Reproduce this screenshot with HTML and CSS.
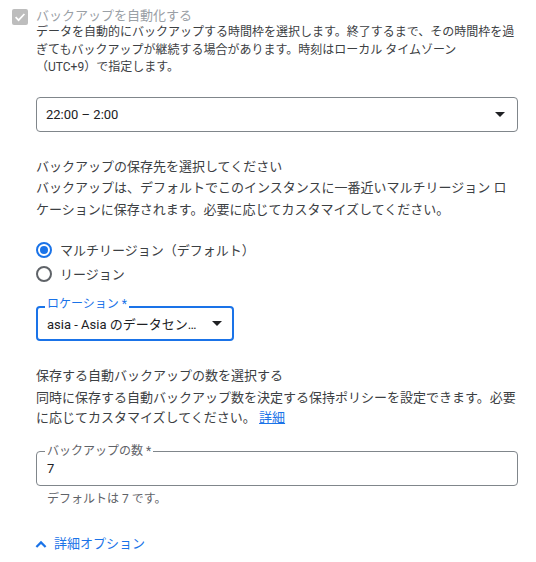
FILE: index.html
```html
<!DOCTYPE html>
<html lang="ja">
<head>
<meta charset="utf-8">
<title>バックアップ設定</title>
<link rel="stylesheet" href="styles.css">
</head>
<body>
<div class="panel">
  <div class="auto-row">
    <span class="checkbox">
      <svg width="14" height="14" viewBox="0 0 14 14"><path d="M2.6 7.2 L5.6 10.2 L11.4 4" fill="none" stroke="#fff" stroke-width="1.7"/></svg>
    </span>
    <div class="auto-text">
      <div class="auto-label">バックアップを自動化する</div>
      <p class="auto-desc">データを自動的にバックアップする時間枠を選択します。終了するまで、その時間枠を過ぎてもバックアップが継続する場合があります。時刻はローカル タイムゾーン<br>（UTC+9）で指定します。</p>
    </div>
  </div>

  <div class="select select-time">
    <span class="select-value">22:00 – 2:00</span>
    <svg class="arrow" width="10" height="5" viewBox="0 0 10 5"><polygon points="0,0 10,0 5,5" fill="#202124"/></svg>
  </div>

  <section class="section">
    <h3 class="section-title">バックアップの保存先を選択してください</h3>
    <p class="section-desc desc-wide">バックアップは、デフォルトでこのインスタンスに一番近いマルチリージョン ロ<br>ケーションに保存されます。必要に応じてカスタマイズしてください。</p>
    <div class="radio-group">
      <div class="radio-row"><span class="radio checked"><span class="radio-dot"></span></span><span>マルチリージョン（デフォルト）</span></div>
      <div class="radio-row"><span class="radio"></span><span>リージョン</span></div>
    </div>
    <div class="select select-location">
      <span class="field-label label-focused">ロケーション *</span>
      <span class="select-value">asia - Asia のデータセン…</span>
      <svg class="arrow" width="10" height="5" viewBox="0 0 10 5"><polygon points="0,0 10,0 5,5" fill="#202124"/></svg>
    </div>
  </section>

  <section class="section">
    <h3 class="section-title">保存する自動バックアップの数を選択する</h3>
    <p class="section-desc desc-tight">同時に保存する自動バックアップ数を決定する保持ポリシーを設定できます。必要<br>に応じてカスタマイズしてください。 <a class="link" href="#">詳細</a></p>
    <div class="count-field">
      <span class="field-label">バックアップの数 *</span>
      <span class="count-value">7</span>
    </div>
    <p class="helper">デフォルトは 7 です。</p>
  </section>

  <div class="advanced">
    <svg width="12" height="8" viewBox="0 0 12 8"><path d="M1.4 7 L6 2.4 L10.6 7" fill="none" stroke="#1a73e8" stroke-width="2.2"/></svg>
    <span>詳細オプション</span>
  </div>
</div>
</body>
</html>
```

FILE: styles.css
```css
* { box-sizing: border-box; }

body {
  margin: 0;
  background: #fff;
  font-family: Roboto, "Noto Sans CJK JP", sans-serif;
  color: #3c4043;
}

.panel {
  width: 536px;
  padding: 8px 18px 0 36px;
}

.auto-row {
  display: flex;
  gap: 8px;
  margin-left: -24px;
}

.checkbox {
  flex: none;
  width: 16px;
  height: 16px;
  margin-top: 1px;
  border-radius: 2px;
  background: #bdbdbd;
  display: flex;
  align-items: center;
  justify-content: center;
}

.auto-label {
  font-size: 13px;
  line-height: 16px;
  color: #9aa0a6;
}

.auto-desc {
  margin: 0;
  font-size: 12px;
  line-height: 17.5px;
  color: #3c4043;
}

.select {
  position: relative;
  height: 35px;
  border: 1px solid #80868b;
  border-radius: 4px;
  display: flex;
  align-items: center;
  justify-content: space-between;
  padding: 0 12px 0 9px;
  font-size: 13px;
  color: #202124;
}

.select-time { margin-top: 20px; }

.select-value { white-space: nowrap; }

.arrow { flex: none; }

.section-title {
  margin: 25px 0 0;
  font-size: 13px;
  font-weight: 400;
  line-height: 20px;
  color: #3c4043;
}

.section-desc {
  margin: 0;
  font-size: 13px;
}

.desc-wide { line-height: 22px; }

.desc-tight {
  margin-top: 2px;
  line-height: 20px;
}

.radio-group {
  margin-top: 17px;
  display: flex;
  flex-direction: column;
}

.radio-row {
  height: 24px;
  display: flex;
  align-items: center;
  gap: 8px;
  font-size: 13px;
  color: #3c4043;
}

.radio {
  flex: none;
  width: 16px;
  height: 16px;
  border: 2px solid #5f6368;
  border-radius: 50%;
  display: flex;
  align-items: center;
  justify-content: center;
}

.radio.checked { border-color: #1a73e8; }

.radio-dot {
  width: 8px;
  height: 8px;
  border-radius: 50%;
  background: #1a73e8;
}

.select-location {
  margin-top: 20px;
  width: 198px;
  border: 2px solid #1a73e8;
  padding: 0 10px 0 9px;
}

.field-label {
  position: absolute;
  top: -7px;
  left: 8px;
  padding: 0 2px;
  background: #fff;
  font-size: 12px;
  line-height: 12px;
  color: #5f6368;
  white-space: nowrap;
}

.label-focused {
  top: -10px;
  left: 7px;
  color: #1a73e8;
}

.link {
  color: #1a73e8;
  text-decoration: underline;
}

.count-field {
  position: relative;
  margin-top: 23px;
  height: 35px;
  border: 1px solid #80868b;
  border-radius: 4px;
  display: flex;
  align-items: center;
  padding-left: 10px;
  font-size: 13px;
  color: #202124;
}

.helper {
  margin: 5px 0 0;
  padding-left: 11px;
  font-size: 12px;
  line-height: 16px;
  color: #5f6368;
}

.advanced {
  margin-top: 27px;
  margin-left: -1px;
  display: flex;
  align-items: center;
  gap: 7px;
  font-size: 13px;
  line-height: 20px;
  color: #1a73e8;
}
```
